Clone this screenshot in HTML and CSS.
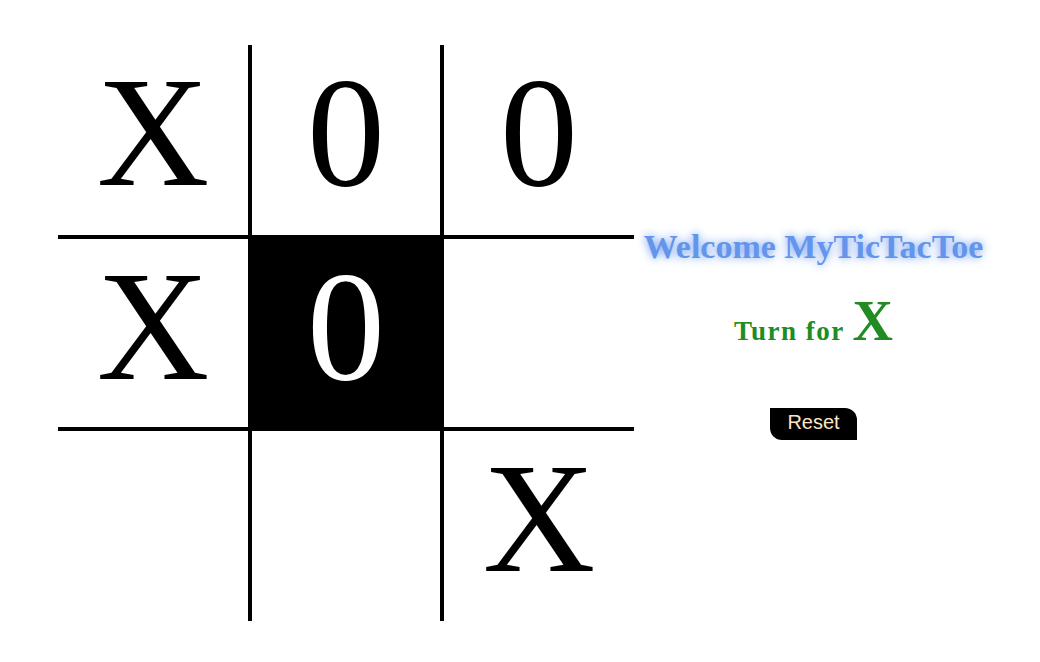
FILE: index.html
```html
<!DOCTYPE html>
<html lang="en">
<head>
<meta charset="utf-8">
<title>MyTicTacToe</title>
<link rel="stylesheet" href="styles.css">
</head>
<body>
<div class="page">
  <div class="board">
    <div class="cell">X</div>
    <div class="cell col-mid">0</div>
    <div class="cell">0</div>
    <div class="cell row-mid">X</div>
    <div class="cell row-mid col-mid active">0</div>
    <div class="cell row-mid"></div>
    <div class="cell"></div>
    <div class="cell col-mid"></div>
    <div class="cell">X</div>
  </div>
  <div class="panel">
    <h1 class="title">Welcome MyTicTacToe</h1>
    <p class="turn">Turn for <span class="turn-mark">X</span></p>
    <button class="reset" type="button">Reset</button>
  </div>
</div>
</body>
</html>
```

FILE: styles.css
```css
html, body {
  margin: 0;
  padding: 0;
  background: #ffffff;
}

.page {
  display: flex;
  padding: 45px 0 0 58px;
}

.board {
  display: grid;
  grid-template-columns: 190px 196px 190px;
  grid-template-rows: 190px 196px 190px;
}

.cell {
  box-sizing: border-box;
  font-family: "Liberation Serif", "Times New Roman", serif;
  font-size: 156px;
  line-height: 175px;
  text-align: center;
  color: #000000;
}

.col-mid {
  border-left: 4px solid #000000;
  border-right: 4px solid #000000;
}

.row-mid {
  border-top: 4px solid #000000;
  border-bottom: 4px solid #000000;
}

.active {
  background: #000000;
  color: #ffffff;
}

.panel {
  width: 359px;
  align-self: center;
  display: flex;
  flex-direction: column;
  align-items: center;
}

.title {
  margin: 0;
  font-family: "Liberation Serif", "Times New Roman", serif;
  font-size: 34px;
  font-weight: bold;
  line-height: 40px;
  color: #6495ed;
  text-shadow: 0 0 10px #6495ed;
}

.turn {
  margin: 26px 0 0;
  font-family: "Liberation Serif", "Times New Roman", serif;
  font-size: 27px;
  font-weight: bold;
  line-height: 1;
  letter-spacing: 1.5px;
  color: #228b22;
}

.turn-mark {
  font-size: 56px;
  letter-spacing: 0;
}

.reset {
  margin-top: 59px;
  padding: 3px 17px 6px;
  border: none;
  border-radius: 0 12px 0 12px;
  background: #000000;
  color: #ffe4c4;
  font-family: "Liberation Sans", Arial, sans-serif;
  font-size: 20px;
  line-height: 23px;
}
```
